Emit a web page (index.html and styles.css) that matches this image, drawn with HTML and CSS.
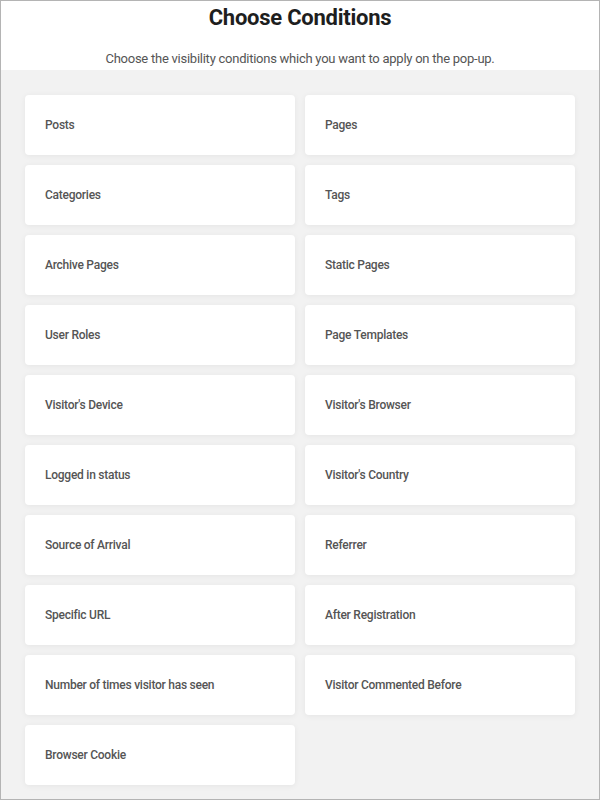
FILE: index.html
```html
<!DOCTYPE html>
<html lang="en">
<head>
    <meta charset="UTF-8">
    <meta name="viewport" content="width=device-width, initial-scale=1.0">
    <title>Choose Conditions</title>
    <link rel="stylesheet" href="styles.css">
</head>
<body>
    <div class="popup">
        <header>
            <h1>Choose Conditions</h1>
            <p>Choose the visibility conditions which you want to apply on the pop-up.</p>
        </header>
        <section class="conditions">
            <a class="card" href="#">Posts</a>
            <a class="card" href="#">Pages</a>
            <a class="card" href="#">Categories</a>
            <a class="card" href="#">Tags</a>
            <a class="card" href="#">Archive Pages</a>
            <a class="card" href="#">Static Pages</a>
            <a class="card" href="#">User Roles</a>
            <a class="card" href="#">Page Templates</a>
            <a class="card" href="#">Visitor's Device</a>
            <a class="card" href="#">Visitor's Browser</a>
            <a class="card" href="#">Logged in status</a>
            <a class="card" href="#">Visitor's Country</a>
            <a class="card" href="#">Source of Arrival</a>
            <a class="card" href="#">Referrer</a>
            <a class="card" href="#">Specific URL</a>
            <a class="card" href="#">After Registration</a>
            <a class="card" href="#">Number of times visitor has seen</a>
            <a class="card" href="#">Visitor Commented Before</a>
            <a class="card" href="#">Browser Cookie</a>
        </section>
    </div>
</body>
</html>
```

FILE: styles.css
```css
body {
    font-family: Roboto, "Liberation Sans", sans-serif;
    margin: 0;
    padding: 0;
}
.popup {
    box-sizing: border-box;
    width: 600px;
    height: 800px;
    border: 1px solid #b4b4b4;
    background-color: #f2f2f2;
}
header {
    background-color: #fff;
    text-align: center;
    padding: 5px 0 2px;
}
header h1 {
    margin: 0;
    font-size: 22px;
    line-height: 24px;
    font-weight: 700;
    letter-spacing: -0.25px;
    color: #1e1e1e;
}
header p {
    margin: 20px 0 0;
    font-size: 13px;
    line-height: 18px;
    letter-spacing: -0.25px;
    color: #555;
}
.conditions {
    display: grid;
    grid-template-columns: 1fr 1fr;
    gap: 10px;
    padding: 25px 24px;
}
.card {
    display: flex;
    align-items: center;
    height: 60px;
    padding: 0 20px;
    background-color: #fff;
    border-radius: 4px;
    box-shadow: 0 1px 6px rgba(0, 0, 0, 0.06);
    color: #555;
    font-size: 12px;
    font-weight: 500;
    letter-spacing: -0.25px;
    text-decoration: none;
}
```
